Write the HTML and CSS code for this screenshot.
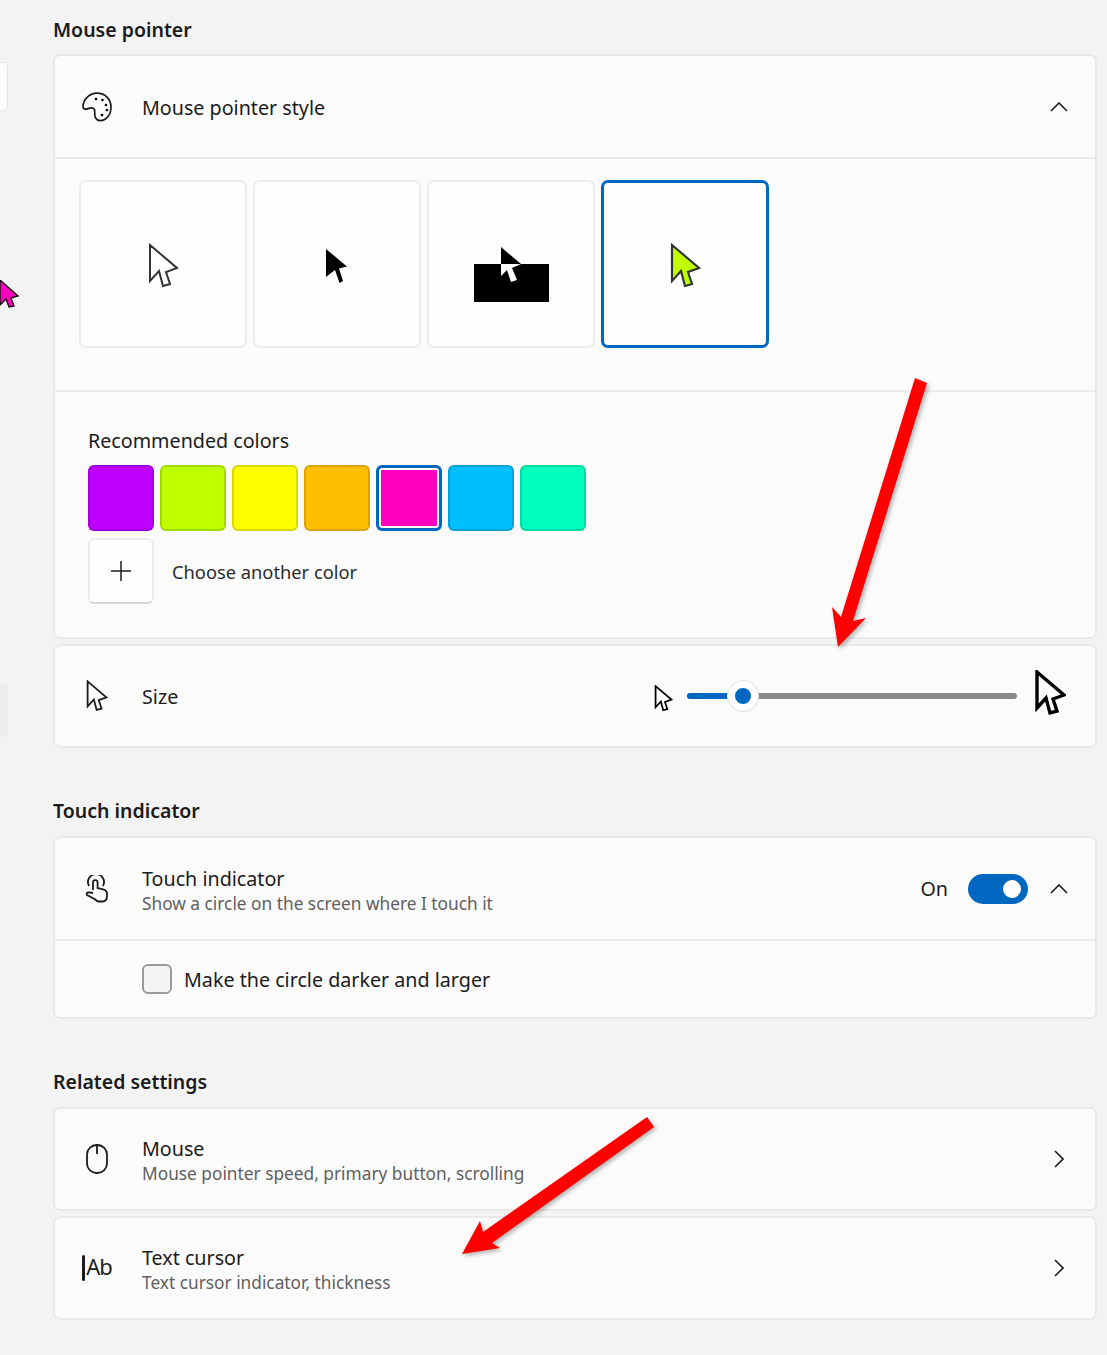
FILE: index.html
```html
<!DOCTYPE html>
<html>
    <head>
        <title>Mouse pointer and touch</title>
        <meta charset="utf-8">
        <link rel="stylesheet" href="styles.css">
    </head>
    <body>
        <svg class="defs">
            <symbol id="pointer" viewBox="-2 -2 31 46">
                <path d="M0 0L27 23L16 27L20 39L13 41L9 26L0 36Z"/>
            </symbol>
            <symbol id="chevron-up" viewBox="0 0 18 10">
                <path d="M1 9L9 1L17 9" fill="none" stroke="#1b1b1b" stroke-width="1.6"/>
            </symbol>
            <symbol id="chevron-right" viewBox="0 0 10 18">
                <path d="M1 1L9 9L1 17" fill="none" stroke="#1b1b1b" stroke-width="1.6"/>
            </symbol>
        </svg>

        <div class="side-tab side-tab-top"></div>
        <div class="side-tab side-tab-low"></div>
        <svg class="side-pointer" width="20" height="28" viewBox="0 0 20 28">
            <path d="M0 0L18 16L11 18L14 26L9 27L6 19L0 25Z" fill="#ff00bf" stroke="#111" stroke-width="1.4"/>
        </svg>

        <main class="content">
            <h2 class="section-title first">Mouse pointer</h2>
            <section class="card">
                <div class="row row-tall">
                    <svg class="row-icon" width="30" height="30" viewBox="0 0 30 30">
                        <path d="M15 1.2C8 1.2 1 7 1 14.5C1 17.3 3.5 17.6 6 16.6C9 15.4 12 15.4 12.6 18C13 20 12 23.2 13.6 26C15.4 29 20 29.6 23.5 27C27 24.5 29 19.5 29 15C29 7 23 1.2 15 1.2Z" fill="none" stroke="#1b1b1b" stroke-width="1.7"/>
                        <circle cx="14" cy="7" r="1.3"/><circle cx="20.5" cy="8" r="1.3"/><circle cx="24" cy="13" r="1.3"/><circle cx="25" cy="18" r="1.3"/><circle cx="20" cy="23" r="1.3"/>
                    </svg>
                    <div class="row-text"><div class="row-title">Mouse pointer style</div></div>
                    <svg class="chevron" width="18" height="10"><use href="#chevron-up"/></svg>
                </div>
                <div class="tiles divider">
                    <div class="tile">
                        <svg class="pointer pointer-outline tile-pointer" width="31" height="46"><use href="#pointer"/></svg>
                    </div>
                    <div class="tile">
                        <svg class="tile-pointer" width="24" height="36" viewBox="0 0 24 36"><path d="M1 1L22 18.5L14 20.5L18 33L14.5 35L10 22L1 29Z"/></svg>
                    </div>
                    <div class="tile">
                        <svg width="75" height="75" viewBox="0 0 75 75">
                            <rect x="0" y="37" width="75" height="38"/>
                            <path d="M27 20V37H47Z"/>
                            <path d="M27 37H47L38 41L43 53L37 55L33 43L27 49Z" fill="#fff"/>
                        </svg>
                    </div>
                    <div class="tile selected">
                        <svg class="pointer pointer-lime tile-pointer" width="31" height="46"><use href="#pointer"/></svg>
                    </div>
                </div>
                <div class="colors divider">
                    <div class="colors-label">Recommended colors</div>
                    <div class="swatches">
                        <div class="swatch" style="background:#bf00ff"></div>
                        <div class="swatch" style="background:#bfff00"></div>
                        <div class="swatch" style="background:#ffff00"></div>
                        <div class="swatch" style="background:#ffbf00"></div>
                        <div class="swatch picked" style="background:#ff00bf"></div>
                        <div class="swatch" style="background:#00bfff"></div>
                        <div class="swatch" style="background:#00ffbf"></div>
                    </div>
                    <div class="add-color">
                        <div class="add-button">
                            <svg width="20" height="20" viewBox="0 0 20 20"><path d="M10 0V20M0 10H20" stroke="#1b1b1b" stroke-width="1.5"/></svg>
                        </div>
                        <span>Choose another color</span>
                    </div>
                </div>
            </section>

            <section class="card card-next">
                <div class="row">
                    <svg class="row-icon pointer pointer-thin" width="22" height="32"><use href="#pointer"/></svg>
                    <div class="row-text"><div class="row-title">Size</div></div>
                    <div class="slider">
                        <svg class="pointer pointer-small" width="19" height="27"><use href="#pointer"/></svg>
                        <div class="track">
                            <div class="track-fill"></div>
                            <div class="thumb"></div>
                        </div>
                        <svg class="pointer pointer-big" width="31" height="46"><use href="#pointer"/></svg>
                    </div>
                </div>
            </section>

            <h2 class="section-title">Touch indicator</h2>
            <section class="card">
                <div class="row row-tall">
                    <svg class="row-icon touch-icon" width="24" height="28" viewBox="0 0 24 28" fill="none" stroke="#1b1b1b" stroke-width="1.8">
                        <path d="M4 11A8 8 0 1 1 18 11"/>
                        <path d="M8 15V7.5A2.3 2.3 0 0 1 12.6 7.5V13L18 14.3C20.5 15 22 16.5 22 18.5V21C22 24 20.5 26.5 17.5 26.5H14C12 26.5 11 25.5 9.5 24L2 20C1 19 2 17.2 3.6 17.3L8 18"/>
                    </svg>
                    <div class="row-text">
                        <div class="row-title">Touch indicator</div>
                        <div class="row-sub">Show a circle on the screen where I touch it</div>
                    </div>
                    <span class="state">On</span>
                    <div class="toggle"><div class="knob"></div></div>
                    <svg class="chevron" width="18" height="10"><use href="#chevron-up"/></svg>
                </div>
                <div class="check-row divider">
                    <div class="checkbox"></div>
                    <span>Make the circle darker and larger</span>
                </div>
            </section>

            <h2 class="section-title">Related settings</h2>
            <section class="card">
                <div class="row">
                    <svg class="row-icon" width="22" height="30" viewBox="0 0 22 30" fill="none" stroke="#1b1b1b" stroke-width="1.8">
                        <rect x="1" y="1" width="20" height="28" rx="9.5"/>
                        <path d="M11 1V10"/>
                    </svg>
                    <div class="row-text">
                        <div class="row-title">Mouse</div>
                        <div class="row-sub">Mouse pointer speed, primary button, scrolling</div>
                    </div>
                    <svg class="chevron chevron-side" width="10" height="18"><use href="#chevron-right"/></svg>
                </div>
            </section>
            <section class="card card-next">
                <div class="row">
                    <div class="row-icon text-icon"><span class="text-bar"></span><span class="text-ab">Ab</span></div>
                    <div class="row-text">
                        <div class="row-title">Text cursor</div>
                        <div class="row-sub">Text cursor indicator, thickness</div>
                    </div>
                    <svg class="chevron chevron-side" width="10" height="18"><use href="#chevron-right"/></svg>
                </div>
            </section>
        </main>

        <svg class="arrows" width="1107" height="1355" viewBox="0 0 1107 1355">
            <polygon points="915,378 927,383 853,621 866,618 838,647 832,607 841,617"/>
            <polygon points="647,1117 654,1127 492,1243 500,1248 462,1254 480,1221 483,1232"/>
        </svg>
    </body>
</html>
```

FILE: styles.css
```css
body {
    margin: 0;
    height: 1355px;
    overflow: hidden;
    position: relative;
    background: #f3f3f3;
    color: #1b1b1b;
    font-family: "Noto Sans", "Open Sans", sans-serif;
    font-size: 19.7px;
}

.defs {
    display: none;
}

.content {
    margin-left: 53px;
    width: 1044px;
}

.section-title {
    font-size: 19.5px;
    font-weight: 600;
    line-height: 28px;
    margin: 49px 0 11px 0;
}

.section-title.first {
    margin: 0 0 10px 0;
    padding-top: 16px;
}

.card {
    background: #fbfbfb;
    border: 2px solid #e9e9e9;
    border-radius: 7px;
}

.card-next {
    margin-top: 5px;
}

.divider {
    border-top: 2px solid #ebebeb;
}

/* rows */
.row {
    height: 100px;
    display: flex;
    align-items: center;
    padding: 0 27px 0 24px;
}

.row-tall {
    height: 101px;
}

.row-icon {
    flex: none;
    width: 36px;
    margin-right: 27px;
}

.row-text {
    flex: 1;
    margin-top: 2px;
}

.row-title {
    line-height: 28px;
}

.row-sub {
    font-size: 17.3px;
    line-height: 22px;
    color: #5f5f5f;
}

.chevron {
    flex: none;
}

.chevron-side {
    margin: 0 4px;
}

.text-icon {
    display: flex;
    align-items: center;
    justify-content: center;
    font-size: 22px;
    letter-spacing: -1px;
}

.text-ab {
    margin-bottom: 4px;
}

.text-bar {
    width: 3px;
    height: 26px;
    margin-right: 1px;
    border-radius: 2px;
    background: #1b1b1b;
}

/* pointers */
.pointer {
    fill: #fff;
    stroke: #333;
    stroke-width: 2;
}

.tile-pointer {
    margin-top: 3px;
}

.pointer-lime {
    fill: #bfff00;
    stroke: #333;
    stroke-width: 2.2;
}

.pointer-thin {
    stroke: #1b1b1b;
    stroke-width: 2.6;
}

.pointer-small {
    stroke: #000;
    stroke-width: 3;
    margin-top: 4px;
}

.pointer-big {
    stroke: #000;
    stroke-width: 3.4;
    margin-left: 4px;
    margin-top: -6px;
}

/* style tiles */
.tiles {
    display: flex;
    gap: 6px;
    padding: 21px 0 42px 24px;
}

.tile {
    box-sizing: border-box;
    width: 168px;
    height: 168px;
    display: flex;
    align-items: center;
    justify-content: center;
    background: #fefefe;
    border: 2px solid #ececec;
    border-radius: 7px;
}

.tile.selected {
    border: 3px solid #0067c0;
}

/* colors */
.colors {
    padding: 36px 0 33px 33px;
}

.colors-label {
    line-height: 26px;
    margin-bottom: 11px;
}

.swatches {
    display: flex;
    gap: 6px;
}

.swatch {
    box-sizing: border-box;
    width: 66px;
    height: 66px;
    border: 2px solid rgba(0, 0, 0, 0.15);
    border-radius: 6px;
}

.swatch.picked {
    border: 3px solid #0067c0;
    box-shadow: inset 0 0 0 2px #fff;
}

.add-color {
    display: flex;
    align-items: center;
    gap: 18px;
    margin-top: 7px;
    font-size: 18.3px;
    color: #2b2b2b;
}

.add-button {
    box-sizing: border-box;
    width: 66px;
    height: 66px;
    display: flex;
    align-items: center;
    justify-content: center;
    background: #fefefe;
    border: 2px solid #ececec;
    border-bottom-color: #d6d6d6;
    border-radius: 6px;
}

/* slider */
.slider {
    display: flex;
    align-items: center;
    gap: 14px;
    margin-right: 2px;
}

.track {
    position: relative;
    width: 330px;
    height: 6px;
    border-radius: 3px;
    background: #8a8a8a;
}

.track-fill {
    width: 45px;
    height: 6px;
    border-radius: 3px;
    background: #0067c0;
}

.thumb {
    position: absolute;
    left: 41px;
    top: -12px;
    box-sizing: border-box;
    width: 30px;
    height: 30px;
    border: 7px solid #fff;
    border-radius: 50%;
    background: #0067c0;
    box-shadow: 0 0 0 1px #e4e4e4;
}

/* toggle */
.state {
    margin-right: 20px;
}

.toggle {
    box-sizing: border-box;
    width: 60px;
    height: 30px;
    margin-right: 22px;
    padding: 6px 7px;
    display: flex;
    justify-content: flex-end;
    border-radius: 15px;
    background: #0067c0;
}

.knob {
    width: 18px;
    height: 18px;
    border-radius: 50%;
    background: #fff;
}

/* checkbox row */
.check-row {
    height: 76px;
    display: flex;
    align-items: center;
    gap: 12px;
    padding-left: 87px;
}

.checkbox {
    box-sizing: border-box;
    width: 30px;
    height: 30px;
    background: #f5f5f5;
    border: 2px solid #9a9a9a;
    border-radius: 6px;
}

/* things lying over the window */
.side-tab {
    position: absolute;
    left: 0;
    width: 8px;
    border-radius: 0 5px 5px 0;
}

.side-tab-top {
    top: 62px;
    height: 47px;
    background: #fbfbfb;
    border: 1px solid #e5e5e5;
    border-left: none;
    width: 7px;
}

.side-tab-low {
    top: 684px;
    height: 53px;
    background: #ececec;
}

.side-pointer {
    position: absolute;
    left: 0;
    top: 280px;
}

.arrows {
    position: absolute;
    left: 0;
    top: 0;
    fill: #ff0000;
    filter: drop-shadow(2px 2px 2px rgba(0, 0, 0, 0.3));
}
```
